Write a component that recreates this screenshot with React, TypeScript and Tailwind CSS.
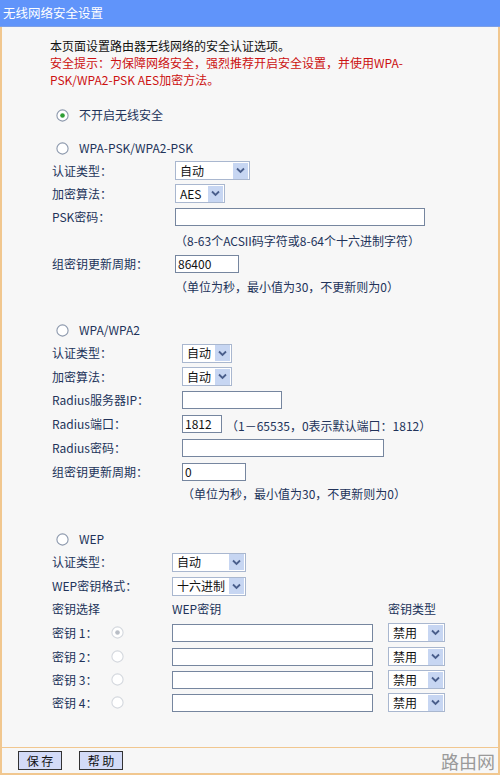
import React from 'react';

const font = { fontFamily: '"Noto Sans CJK SC", "Noto Sans", sans-serif' };

function Radio({ checked = false, disabled = false }: { checked?: boolean; disabled?: boolean }) {
  const ring = disabled ? '#d4d8de' : '#8d99ad';
  const dot = disabled ? '#b9bec6' : '#2f9e34';
  return (
    <svg width="13" height="13" viewBox="0 0 13 13" className="shrink-0">
      <circle cx="6.5" cy="6.5" r="5.6" fill="#fff" stroke={ring} strokeWidth="1.1" />
      {checked && <circle cx="6.5" cy="6.5" r="2.3" fill={dot} />}
    </svg>
  );
}

function Select({ value, width }: { value: string; width: string }) {
  return (
    <div className={`${width} h-[19px] flex items-center border border-[#a9b7cf] bg-white`}>
      <span className="flex-1 pl-[4px] text-[12px] leading-none text-[#111]">{value}</span>
      <span className="w-[15px] h-[16px] mr-px bg-[#c7d6f2] flex items-center justify-center">
        <svg width="9" height="7" viewBox="0 0 9 7">
          <path d="M1 1.5 L4.5 5 L8 1.5" fill="none" stroke="#4a5f8c" strokeWidth="1.8" />
        </svg>
      </span>
    </div>
  );
}

function Input({ width, value }: { width: string; value?: string }) {
  return (
    <div className={`${width} h-[18px] flex items-center border border-[#76869f] bg-white pl-[2px] text-[12px] leading-none text-[#111]`}>
      {value}
    </div>
  );
}

function Row({ label, labelW, children, h = 'h-[23px]' }: { label: string; labelW: string; children: React.ReactNode; h?: string }) {
  return (
    <div className={`${h} flex items-center`}>
      <span className={`${labelW} shrink-0 text-[12px] text-[#22335a]`}>{label}</span>
      {children}
    </div>
  );
}

function Note({ text }: { text: string }) {
  return <span className="text-[12px] text-[#22335a]">{text}</span>;
}

function ModeRadio({ label, checked, className }: { label: string; checked?: boolean; className: string }) {
  return (
    <div className={`${className} h-[22px] flex items-center pl-[6px] gap-[10px]`}>
      <Radio checked={checked} />
      <span className="text-[12px] text-[#22335a]">{label}</span>
    </div>
  );
}

export default function App() {
  const keys = ['1', '2', '3', '4'];
  return (
    <div style={font} className="w-[500px] h-[775px] flex flex-col bg-[#f7f7f7]">
      <div className="h-[27px] shrink-0 bg-[#6094fa] flex items-center pl-[3px] border-b border-[#7d9fe6]">
        <span className="text-[12.5px] text-white">无线网络安全设置</span>
      </div>

      <div className="flex-1 flex flex-col border-l-2 border-r-2 border-b-2 border-[#f1c78f]">
        <div className="flex-1 pl-[48px] pt-[10px]">
          <div className="text-[12px] leading-[17px]">
            <div className="text-[#111]">本页面设置路由器无线网络的安全认证选项。</div>
            <div className="text-[#cc1111]">安全提示：为保障网络安全，强烈推荐开启安全设置，并使用WPA-</div>
            <div className="text-[#cc1111]">PSK/WPA2-PSK AES加密方法。</div>
          </div>

          <ModeRadio className="mt-[16px]" label="不开启无线安全" checked />

          <ModeRadio className="mt-[11px]" label="WPA-PSK/WPA2-PSK" />
          <div className="pl-[2px]">
            <Row label="认证类型：" labelW="w-[123px]"><Select value="自动" width="w-[75px]" /></Row>
            <Row label="加密算法：" labelW="w-[123px]"><Select value="AES" width="w-[50px]" /></Row>
            <Row label="PSK密码：" labelW="w-[123px]" h="h-[24px]"><Input width="w-[250px]" /></Row>
            <Row label="" labelW="w-[123px]"><Note text="（8-63个ACSII码字符或8-64个十六进制字符）" /></Row>
            <Row label="组密钥更新周期：" labelW="w-[123px]" h="h-[24px]"><Input width="w-[64px]" value="86400" /></Row>
            <Row label="" labelW="w-[123px]" h="h-[22px]"><Note text="（单位为秒，最小值为30，不更新则为0）" /></Row>
          </div>

          <ModeRadio className="mt-[21px]" label="WPA/WPA2" />
          <div className="pl-[2px]">
            <Row label="认证类型：" labelW="w-[130px]" h="h-[24px]"><Select value="自动" width="w-[50px]" /></Row>
            <Row label="加密算法：" labelW="w-[130px]"><Select value="自动" width="w-[50px]" /></Row>
            <Row label="Radius服务器IP：" labelW="w-[130px]" h="h-[24px]"><Input width="w-[100px]" /></Row>
            <Row label="Radius端口：" labelW="w-[130px]" h="h-[24px]">
              <Input width="w-[40px]" value="1812" />
              <span className="ml-[4px]"><Note text="（1－65535，0表示默认端口：1812）" /></span>
            </Row>
            <Row label="Radius密码：" labelW="w-[130px]" h="h-[24px]"><Input width="w-[202px]" /></Row>
            <Row label="组密钥更新周期：" labelW="w-[130px]"><Input width="w-[64px]" value="0" /></Row>
            <Row label="" labelW="w-[130px]" h="h-[22px]"><Note text="（单位为秒，最小值为30，不更新则为0）" /></Row>
          </div>

          <ModeRadio className="mt-[23px]" label="WEP" />
          <div className="pl-[2px]">
            <Row label="认证类型：" labelW="w-[120px]" h="h-[24px]"><Select value="自动" width="w-[74px]" /></Row>
            <Row label="WEP密钥格式：" labelW="w-[120px]" h="h-[24px]"><Select value="十六进制" width="w-[74px]" /></Row>
            <div className="h-[22px] flex items-center text-[12px] text-[#22335a]">
              <span className="w-[120px]">密钥选择</span>
              <span className="w-[216px]">WEP密钥</span>
              <span>密钥类型</span>
            </div>
            {keys.map((k, i) => (
              <div key={k} className={`${i === 0 ? 'h-[25px]' : 'h-[23px]'} flex items-center`}>
                <span className="w-[59px] text-[12px] text-[#22335a]">密钥 {k}：</span>
                <span className="w-[61px]"><Radio checked={i === 0} disabled /></span>
                <Input width="w-[201px]" />
                <span className="ml-[15px]"><Select value="禁用" width="w-[57px]" /></span>
              </div>
            ))}
          </div>
        </div>

        <div className="h-[26px] shrink-0 border-t border-[#f1c78f] flex items-center pl-[16px] gap-[17px]">
          <button className="w-[44px] h-[19px] bg-[#d3dbf7] border border-[#333] text-[12px] leading-none text-[#111]">保 存</button>
          <button className="w-[44px] h-[19px] bg-[#d3dbf7] border border-[#333] text-[12px] leading-none text-[#111]">帮 助</button>
          <span className="ml-auto mr-[3px] text-[18px] leading-none text-[#9a9a9a]">路由网</span>
        </div>
      </div>
    </div>
  );
}
